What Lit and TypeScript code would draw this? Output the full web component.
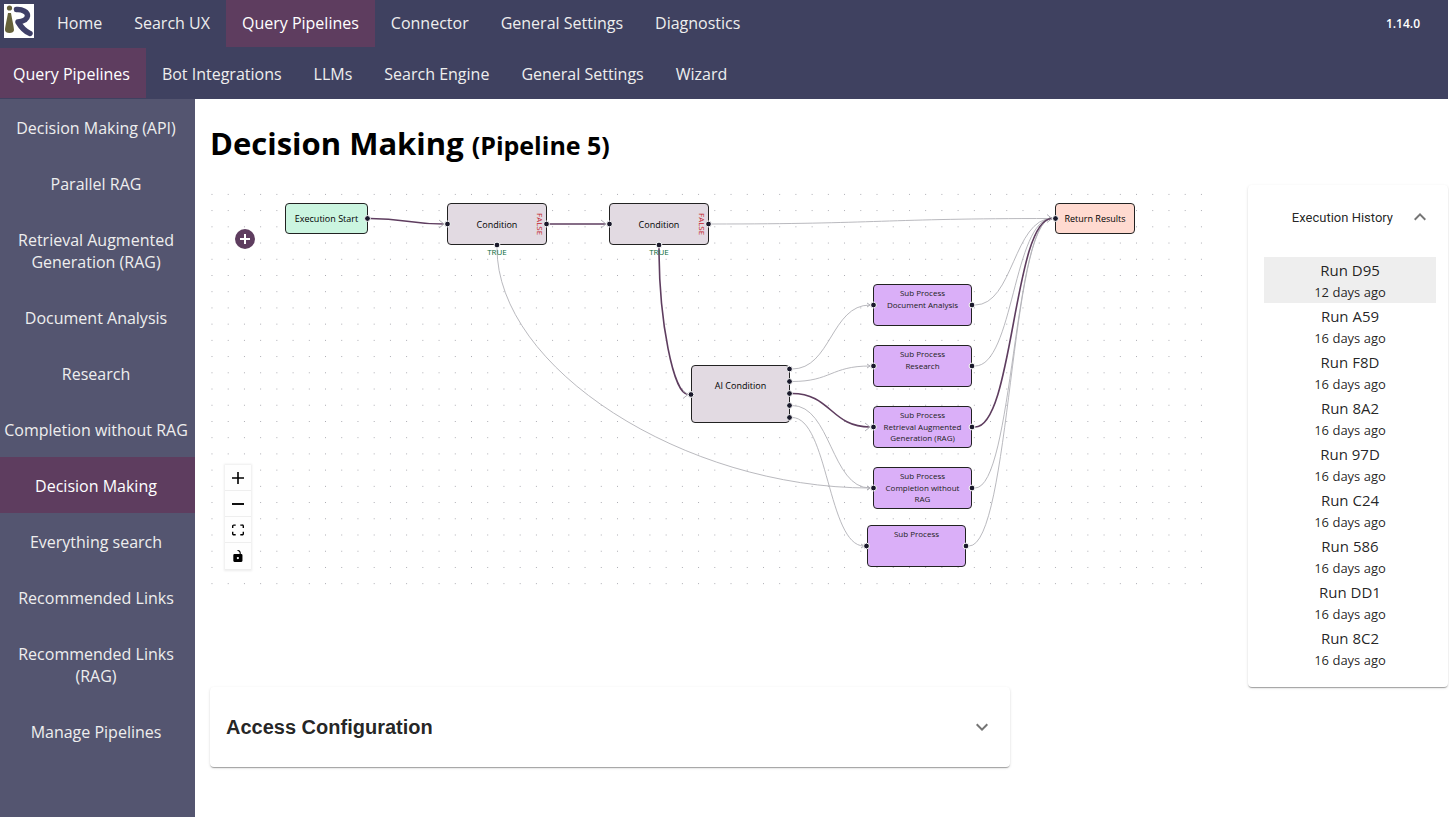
import { LitElement, html, svg, css } from "lit";
import { customElement, state } from "lit/decorators.js";
import { classMap } from "lit/directives/class-map.js";

type Kind = "start" | "condition" | "ai" | "sub" | "end";

interface FlowNode {
  kind: Kind;
  x: number;
  y: number;
  w: number;
  h: number;
  label: string;
  detail?: string;
}

interface Edge {
  from: [number, number];
  to: [number, number];
  down?: boolean;
  active?: boolean;
}

const TOP_NAV = ["Home", "Search UX", "Query Pipelines", "Connector", "General Settings", "Diagnostics"];
const SUB_NAV = ["Query Pipelines", "Bot Integrations", "LLMs", "Search Engine", "General Settings", "Wizard"];
const PIPELINES = [
  "Decision Making (API)",
  "Parallel RAG",
  "Retrieval Augmented Generation (RAG)",
  "Document Analysis",
  "Research",
  "Completion without RAG",
  "Decision Making",
  "Everything search",
  "Recommended Links",
  "Recommended Links (RAG)",
  "Manage Pipelines",
];
const RUNS = [
  ["D95", "12 days ago"],
  ["A59", "16 days ago"],
  ["F8D", "16 days ago"],
  ["8A2", "16 days ago"],
  ["97D", "16 days ago"],
  ["C24", "16 days ago"],
  ["586", "16 days ago"],
  ["DD1", "16 days ago"],
  ["8C2", "16 days ago"],
];

const NODES: FlowNode[] = [
  { kind: "start", x: 75, y: 18, w: 83, h: 31, label: "Execution Start" },
  { kind: "condition", x: 237, y: 18, w: 100, h: 42, label: "Condition" },
  { kind: "condition", x: 399, y: 18, w: 100, h: 42, label: "Condition" },
  { kind: "end", x: 845, y: 18, w: 80, h: 31, label: "Return Results" },
  { kind: "ai", x: 481, y: 180, w: 99, h: 58, label: "AI Condition" },
  { kind: "sub", x: 663, y: 99, w: 99, h: 42, label: "Sub Process", detail: "Document Analysis" },
  { kind: "sub", x: 663, y: 160, w: 99, h: 42, label: "Sub Process", detail: "Research" },
  { kind: "sub", x: 663, y: 221, w: 99, h: 42, label: "Sub Process", detail: "Retrieval Augmented Generation (RAG)" },
  { kind: "sub", x: 663, y: 282, w: 99, h: 42, label: "Sub Process", detail: "Completion without RAG" },
  { kind: "sub", x: 657, y: 340, w: 99, h: 42, label: "Sub Process" },
];

const HANDLES: [number, number][] = [
  [157.5, 33.5], [237.5, 39], [336.5, 39], [287, 60], [399.5, 39], [498.5, 39], [449, 60],
  [845.5, 33.5], [481, 209.5],
  [579.5, 184], [579.5, 196.5], [579.5, 208.5], [579.5, 220.5], [579.5, 232.5],
  [663.5, 120], [762, 120], [663.5, 181], [762, 181], [663.5, 242], [762, 242],
  [663.5, 303], [762, 303], [656.5, 361], [756, 361],
];

const END: [number, number] = [842, 33.5];
const EDGES: Edge[] = [
  { from: [501, 39], to: END },
  { from: [287, 63], to: [660, 303], down: true },
  { from: [582, 184], to: [660, 120] },
  { from: [582, 196.5], to: [660, 181] },
  { from: [582, 220.5], to: [660, 303] },
  { from: [582, 232.5], to: [654, 361] },
  { from: [765, 120], to: END },
  { from: [765, 181], to: END },
  { from: [765, 303], to: END },
  { from: [759, 361], to: END },
  { from: [160, 33.5], to: [234, 39], active: true },
  { from: [339, 39], to: [396, 39], active: true },
  { from: [449, 63], to: [478, 209.5], down: true, active: true },
  { from: [582, 208.5], to: [660, 242], active: true },
  { from: [765, 242], to: END, active: true },
];

function edgePath({ from: [sx, sy], to: [tx, ty], down }: Edge): string {
  const half = (tx - sx) / 2;
  const first = down ? `${sx},${sy + (ty - sy) / 2}` : `${sx + half},${sy}`;
  return `M${sx},${sy} C${first} ${tx - half},${ty} ${tx},${ty}`;
}

@customElement("pipeline-canvas")
export class PipelineCanvas extends LitElement {
  static styles = css`
    :host {
      display: block;
      position: relative;
      height: 400px;
      overflow: hidden;
      color: #000;
      font-size: 9px;
      line-height: 12px;
    }
    button {
      font: inherit;
      border: 0;
      padding: 0;
      cursor: pointer;
    }
    .wires {
      position: absolute;
      inset: 0;
      width: 100%;
      height: 100%;
    }
    .edge { fill: none; stroke: #b1b1b7; stroke-width: 1; stroke-opacity: 0.9; }
    .edge.active { stroke: #5e3d5f; stroke-width: 1.6; stroke-opacity: 1; }
    .arrow { fill: none; stroke: #b1b1b7; stroke-width: 1; }
    .handle { fill: #1a192b; stroke: #fff; stroke-width: 1; }
    .node {
      position: absolute;
      box-sizing: border-box;
      display: flex;
      flex-direction: column;
      align-items: center;
      justify-content: center;
      text-align: center;
      border: 1px solid #222;
      border-radius: 4px;
    }
    .start { background: #cbf5e0; }
    .end { background: #ffdad0; }
    .condition { background: #e2dae2; padding-top: 2px; }
    .ai { background: #e2dae2; padding-bottom: 16px; }
    .sub {
      background: #daaff8;
      color: #222;
      justify-content: flex-start;
      padding: 2px 8px;
      font-size: 8px;
    }
    .detail { line-height: 11px; }
    .no, .yes {
      position: absolute;
      font-size: 8px;
      line-height: 8px;
    }
    .no { color: #c2252c; right: 2px; top: 9px; writing-mode: vertical-rl; }
    .yes { color: #0b6b3a; top: 44px; }
    .add {
      position: absolute;
      left: 25px;
      top: 44px;
      width: 20px;
      height: 20px;
      border-radius: 50%;
      background: #5e3d5f;
      display: grid;
      place-items: center;
    }
    .controls {
      position: absolute;
      left: 15px;
      bottom: 15px;
      display: grid;
      box-shadow: 0 0 2px 1px rgba(0, 0, 0, 0.08);
    }
    .controls button {
      width: 26px;
      height: 26px;
      display: grid;
      place-items: center;
      background: #fefefe;
      border-bottom: 1px solid #eee;
      box-sizing: border-box;
    }
    .controls button:last-child { height: 27px; }
  `;

  render() {
    return html`
      <svg class="wires" aria-hidden="true">
        <defs>
          <pattern id="dots" x="1.5" y="8.9" width="16.22" height="16.22" patternUnits="userSpaceOnUse">
            <circle cx="0.5" cy="0.5" r="0.5" fill="#91919a"></circle>
          </pattern>
        </defs>
        <rect width="100%" height="100%" fill="url(#dots)"></rect>
        ${EDGES.map(
          (e) => svg`
            <path class="edge ${e.active ? "active" : ""}" d=${edgePath(e)}></path>
            <path class="arrow" d=${
              e.active
                ? `M${e.to[0] - 5},${e.to[1] - 4} l5,4 l-5,4`
                : `M${e.to[0] - 3},${e.to[1] - 2} l3,2 l-3,2`
            }></path>`
        )}
      </svg>
      ${NODES.map(
        (n) => html`
          <div class="node ${n.kind}" style="left:${n.x}px;top:${n.y}px;width:${n.w}px;height:${n.h}px">
            <span>${n.label}</span>
            ${n.detail ? html`<span class="detail">${n.detail}</span>` : ""}
            ${n.kind === "condition" ? html`<span class="no">FALSE</span><span class="yes">TRUE</span>` : ""}
          </div>
        `
      )}
      <svg class="wires" aria-hidden="true">
        ${HANDLES.map(([x, y]) => svg`<circle class="handle" cx=${x} cy=${y} r="2.9"></circle>`)}
      </svg>
      <button class="add" aria-label="Add step">
        <svg width="10" height="10" viewBox="0 0 10 10"><path d="M5 0V10M0 5H10" stroke="#fff" stroke-width="2"></path></svg>
      </button>
      <div class="controls">
        <button aria-label="Zoom in">
          <svg width="12" height="12" viewBox="0 0 32 32"><path d="M32 18.133H18.133V32h-4.266V18.133H0v-4.266h13.867V0h4.266v13.867H32z"></path></svg>
        </button>
        <button aria-label="Zoom out">
          <svg width="12" height="12" viewBox="0 0 32 32"><path d="M0 13.5h32v5H0z"></path></svg>
        </button>
        <button aria-label="Fit view">
          <svg width="12" height="12" viewBox="0 0 32 30"><path d="M3.692 4.63c0-.53.4-.938.939-.938h5.215V0H4.708C2.13 0 0 2.054 0 4.63v5.216h3.692V4.631zM27.354 0h-5.2v3.692h5.17c.53 0 .984.4.984.939v5.215H32V4.631A4.624 4.624 0 0027.354 0zm.954 24.83c0 .532-.4.94-.939.94h-5.215v3.768h5.215c2.577 0 4.631-2.13 4.631-4.707v-5.139h-3.692v5.139zm-23.677.94c-.531 0-.939-.4-.939-.94v-5.138H0v5.139c0 2.577 2.13 4.707 4.708 4.707h5.138V25.77H4.631z"></path></svg>
        </button>
        <button aria-label="Toggle lock">
          <svg width="12" height="12" viewBox="0 0 25 32"><path d="M21.333 10.667H19.81V7.619C19.81 3.429 16.38 0 12.19 0c-4.114 1.828-1.37 2.133.305 2.438 1.676.305 4.42 2.59 4.42 5.181v3.048H3.047A3.056 3.056 0 000 13.714v15.238A3.056 3.056 0 003.048 32h18.285a3.056 3.056 0 003.048-3.048V13.714a3.056 3.056 0 00-3.048-3.047zM12.19 24.533a3.056 3.056 0 01-3.047-3.047 3.056 3.056 0 013.047-3.048 3.056 3.056 0 013.048 3.048 3.056 3.056 0 01-3.048 3.047z"></path></svg>
        </button>
      </div>
    `;
  }
}

@customElement("app-root")
export class AppRoot extends LitElement {
  @state() private run = "D95";
  @state() private pipeline = "Decision Making";

  static styles = css`
    :host {
      display: flex;
      flex-direction: column;
      min-height: 100vh;
      background: #fff;
      font-family: "Open Sans", "Noto Sans", sans-serif;
      font-size: 16px;
      line-height: 22px;
      color: #000;
    }
    a { color: #eee; text-decoration: none; }
    button { border: 0; background: none; cursor: pointer; color: inherit; }
    .header {
      background: #3f4160;
      display: grid;
      gap: 1px;
      padding-bottom: 1px;
      margin-right: 1px;
    }
    .bar { display: flex; align-items: stretch; }
    .bar a { padding: 12px 16px 13px; }
    .sub a { padding: 15px 16px 13px; }
    .sub a:first-child { padding-left: 13px; }
    .bar .current, .side .current { background: #5e3d5f; color: #fff; }
    .logo { display: block; margin: 4px 7px 0 4px; }
    .version {
      margin-left: auto;
      padding: 13px 28px 0 0;
      color: #fff;
      font-size: 12px;
      font-weight: 600;
    }
    .body { flex: 1; display: flex; }
    .side {
      flex: 0 0 195px;
      background: #545570;
      display: flex;
      flex-direction: column;
    }
    .side a { padding: 18px 3px 16px 0; text-align: center; }
    .main { flex: 1; min-width: 0; padding: 0 1px 0 15px; }
    h1 {
      margin: 0;
      padding: 22px 0 20px;
      font-size: 31px;
      line-height: 44px;
      font-weight: 700;
    }
    h1 small { font-size: 25px; line-height: 1; }
    .work { display: grid; grid-template-columns: 1fr 200px; gap: 40px; align-items: start; }
    .card {
      border-radius: 4px;
      background: #fff;
      color: rgba(0, 0, 0, 0.87);
      box-shadow: 0 2px 1px -1px rgba(0, 0, 0, 0.2), 0 1px 1px 0 rgba(0, 0, 0, 0.14), 0 1px 3px 0 rgba(0, 0, 0, 0.12);
    }
    .toggle {
      width: 100%;
      display: flex;
      align-items: center;
      font-family: Roboto, "Liberation Sans", sans-serif;
    }
    .history .toggle { height: 64px; padding: 0 16px; font-size: 13px; justify-content: flex-end; gap: 15px; }
    .runs { list-style: none; margin: 0; padding: 8px 12px 16px 16px; }
    .runs button {
      display: block;
      width: 100%;
      padding: 2px 0 4px;
      font-family: inherit;
      font-size: 15px;
      line-height: 22px;
      text-align: center;
      height: 46px;
    }
    .runs .chosen { background: #eee; }
    .runs small { display: block; font-size: 13px; line-height: 22px; }
    .access { max-width: 800px; }
    .access .toggle {
      height: 80px;
      padding: 0 16px;
      justify-content: space-between;
      font-family: "Liberation Sans", Arial, sans-serif;
      font-size: 20px;
      font-weight: 700;
    }
  `;

  private links(items: string[], current: string) {
    return items.map((t) => html`<a href="#" class=${classMap({ current: t === current })}>${t}</a>`);
  }

  private chevron(d: string) {
    return html`<svg width="24" height="24" viewBox="0 0 24 24" fill="#757575"><path d=${d}></path></svg>`;
  }

  render() {
    return html`
      <header class="header">
        <nav class="bar" aria-label="Main">
          <svg class="logo" width="30" height="34" viewBox="0 0 30 34" role="img" aria-label="iR">
            <rect width="30" height="34" fill="#fff"></rect>
            <circle cx="5.500" cy="4" r="2.600" fill="#66623a"></circle>
            <path d="M4 9h3c1 6 3 14 3 17c0 2-2 3-4.500 3s-4.500-1-4.500-3c0-3 2-11 3-17z" fill="#66623a"></path>
            <path d="M12.500 5.500C18 5 24 8 23.500 12c-.5 4-6 5.500-9.500 6c3 5 7 9.500 12 11.500" fill="none" stroke="#3f4068" stroke-width="5.500" stroke-linecap="round" stroke-linejoin="round"></path>
          </svg>
          ${this.links(TOP_NAV, "Query Pipelines")}
          <span class="version">1.14.0</span>
        </nav>
        <nav class="bar sub" aria-label="Query pipelines">${this.links(SUB_NAV, "Query Pipelines")}</nav>
      </header>
      <div class="body">
        <nav class="side" aria-label="Pipelines">
          ${PIPELINES.map(
            (p) => html`<a href="#" class=${classMap({ current: p === this.pipeline })} @click=${() => (this.pipeline = p)}>${p}</a>`
          )}
        </nav>
        <main class="main">
          <h1>Decision Making <small>(Pipeline 5)</small></h1>
          <div class="work">
            <pipeline-canvas></pipeline-canvas>
            <section class="card history">
              <button class="toggle" aria-expanded="true">
                <span>Execution History</span>
                ${this.chevron("M12 8l-6 6 1.410 1.410L12 10.830l4.590 4.580L18 14z")}
              </button>
              <ul class="runs">
                ${RUNS.map(
                  ([id, age]) => html`<li>
                    <button class=${classMap({ chosen: id === this.run })} @click=${() => (this.run = id)}>
                      Run ${id}<small>${age}</small>
                    </button>
                  </li>`
                )}
              </ul>
            </section>
          </div>
          <section class="card access">
            <button class="toggle" aria-expanded="false">
              <span>Access Configuration</span>
              ${this.chevron("M16.590 8.590L12 13.170 7.410 8.590 6 10l6 6 6-6z")}
            </button>
          </section>
        </main>
      </div>
    `;
  }
}
